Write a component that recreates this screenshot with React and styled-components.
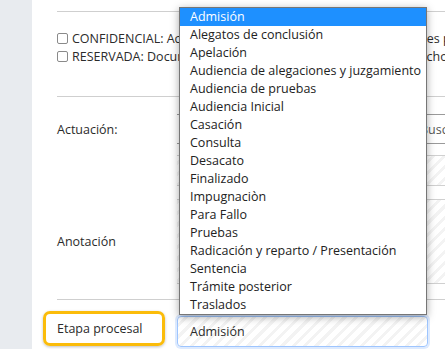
import React from 'react';
import styled, { createGlobalStyle } from 'styled-components';

const etapas = [
  'Admisión',
  'Alegatos de conclusión',
  'Apelación',
  'Audiencia de alegaciones y juzgamiento',
  'Audiencia de pruebas',
  'Audiencia Inicial',
  'Casación',
  'Consulta',
  'Desacato',
  'Finalizado',
  'Impugnaciòn',
  'Para Fallo',
  'Pruebas',
  'Radicación y reparto / Presentación',
  'Sentencia',
  'Trámite posterior',
  'Traslados',
];

const GlobalStyle = createGlobalStyle`
  html, body {
    margin: 0;
    padding: 0;
    overflow: hidden;
  }
  body {
    font-family: "Open Sans", "Noto Sans", Arial, sans-serif;
    font-size: 12.5px;
    color: #2b2b2b;
    background: #ffffff;
  }
`;

const App = () => {
  return (
    <Page>
      <GlobalStyle />
      <Sidebar />
      <Main>
        <TopSpacer />
        <Section>
          <CheckList>
            <CheckRow>
              <Box />
              <span>CONFIDENCIAL: Actuación visible solo por las partes procesales para</span>
            </CheckRow>
            <CheckRow>
              <Box />
              <span>RESERVADA: Documento visible solo a la secretaría del despacho judicial</span>
            </CheckRow>
          </CheckList>
        </Section>
        <Section>
          <FieldRow pad="17px 0 0" align="flex-start">
            <Label>Actuación:</Label>
            <FieldCol>
              <Search>Buscar...</Search>
              <Hatched height="29px" />
            </FieldCol>
          </FieldRow>
          <FieldRow pad="13px 0 15px">
            <Label>Anotación</Label>
            <FieldCol>
              <Hatched height="83px" />
            </FieldCol>
          </FieldRow>
        </Section>
        <Section>
          <StageRow>
            <HighlightLabel>Etapa procesal</HighlightLabel>
            <SelectWrap>
              <Menu>
                {etapas.map((e, i) => (
                  <Option key={e} active={i === 0}>
                    {e}
                  </Option>
                ))}
              </Menu>
              <Select>Admisión</Select>
            </SelectWrap>
          </StageRow>
        </Section>
      </Main>
    </Page>
  );
};

const Page = styled.div`
  display: flex;
  width: 445px;
  height: 349px;
  overflow: hidden;
`;

const Sidebar = styled.div`
  width: 32px;
  flex-shrink: 0;
  background: #e8ebef;
`;

const Main = styled.div`
  flex: 1;
  padding-left: 25px;
  min-width: 0;
`;

const TopSpacer = styled.div`
  height: 11px;
`;

const Section = styled.div`
  border-top: 1px solid #cfcfcf;
`;

const CheckList = styled.div`
  padding: 17px 0 31px;
  display: flex;
  flex-direction: column;
`;

const CheckRow = styled.div`
  display: flex;
  align-items: center;
  height: 18px;
  white-space: nowrap;
  overflow: hidden;
  gap: 4px;
`;

const Box = styled.span`
  width: 9px;
  height: 9px;
  flex-shrink: 0;
  border: 1px solid #8a8a8a;
  border-radius: 2px;
  background: #fff;
`;

const FieldRow = styled.div`
  display: flex;
  align-items: ${(p) => p.align || 'center'};
  padding: ${(p) => p.pad};
`;

const Label = styled.div`
  width: 120px;
  min-height: 30px;
  flex-shrink: 0;
  display: flex;
  align-items: center;
`;

const FieldCol = styled.div`
  flex: 1;
  display: flex;
  flex-direction: column;
  gap: 11px;
`;

const Search = styled.div`
  height: 28px;
  border-top: 1px solid #9a9a9a;
  border-bottom: 1px solid #9a9a9a;
  display: flex;
  align-items: center;
  padding-left: 243px;
  color: #555;
  white-space: nowrap;
`;

const hatch = `repeating-linear-gradient(
  -45deg,
  #ffffff 0px,
  #ffffff 5px,
  #f3f3f3 5px,
  #f3f3f3 8px
)`;

const Hatched = styled.div`
  height: ${(p) => p.height};
  border-top: 1px solid #d0d0d0;
  border-bottom: 1px solid #d0d0d0;
  background: ${hatch};
`;

const StageRow = styled.div`
  display: flex;
  align-items: flex-start;
  padding-top: 11px;
`;

const HighlightLabel = styled.div`
  width: 105px;
  height: 29px;
  margin-left: -14px;
  margin-right: 12px;
  padding-left: 11px;
  display: flex;
  align-items: center;
  border: 3px solid #fbbc0a;
  border-radius: 7px;
  box-shadow: 0 1px 3px rgba(0, 0, 0, 0.25);
  flex-shrink: 0;
`;

const SelectWrap = styled.div`
  position: relative;
  margin-top: 5px;
`;

const Select = styled.div`
  width: 237px;
  height: 29px;
  padding-left: 12px;
  display: flex;
  align-items: center;
  border: 1px solid #9ec5fe;
  border-radius: 4px;
  box-shadow: 0 0 0 2px rgba(120, 170, 250, 0.25);
  background: ${hatch};
`;

const Menu = styled.div`
  position: absolute;
  left: 2px;
  bottom: 100%;
  margin-bottom: 1px;
  width: 246px;
  border: 1px solid #767676;
  background: #fff;
  box-shadow: 0 2px 8px rgba(0, 0, 0, 0.35);
  z-index: 2;
`;

const Option = styled.div`
  height: 18px;
  line-height: 18px;
  padding-left: 10px;
  white-space: nowrap;
  color: ${(p) => (p.active ? '#ffffff' : '#222')};
  background: ${(p) => (p.active ? '#1e90ff' : 'transparent')};
`;

export default App;
